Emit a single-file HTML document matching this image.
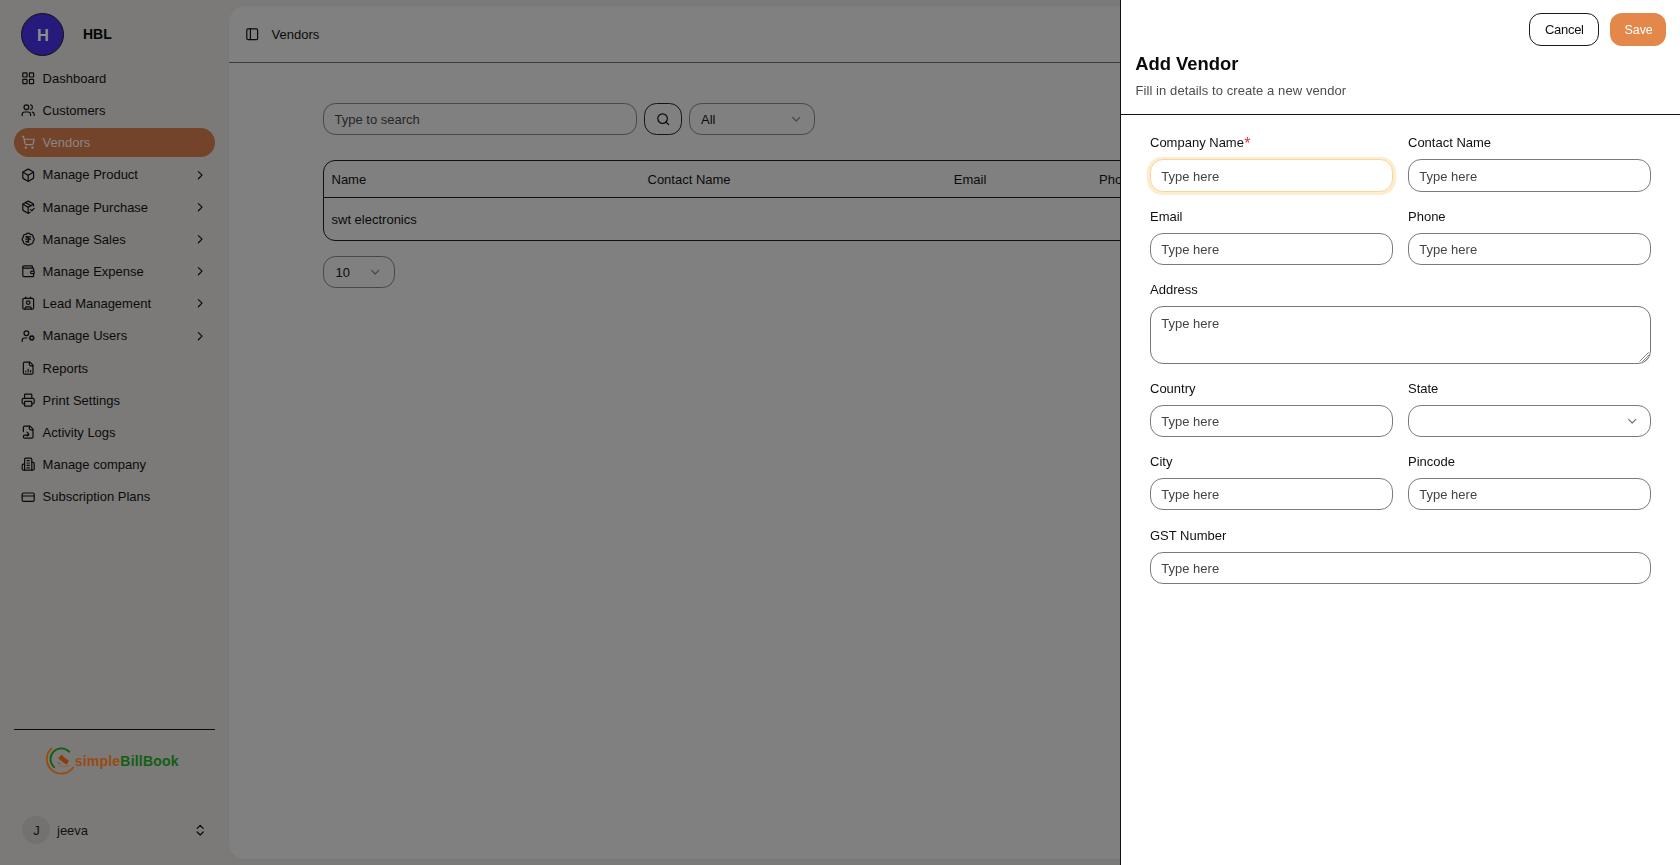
<!DOCTYPE html>
<html><head><meta charset="utf-8"><title>Add Vendor</title>
<style>
*{box-sizing:border-box;margin:0;padding:0}
html,body{width:1680px;height:865px;overflow:hidden}
body{position:relative;background:#7b7a78;font-family:"Liberation Sans",sans-serif;color:#0a0a0a}
.a{position:absolute}
.t{position:absolute;white-space:nowrap}
svg.i{position:absolute;fill:none;stroke:currentColor;stroke-linecap:round;stroke-linejoin:round;overflow:visible}
.inp{position:absolute;border:1px solid #7b7b7b;border-radius:13px;background:#fff}
.req{color:#f2303e;font-size:16px;line-height:10px;position:relative;top:2px;left:0.3px}
textarea{font-family:"Liberation Sans",sans-serif}
textarea::placeholder{color:#444;opacity:1}
</style></head><body>
<div class="a" style="left:21px;top:13px;width:43px;height:43px;border-radius:50%;background:#261b7c;border:1px solid #111"></div>
<div class="t" style="left:37.00px;top:24.78px;font-size:16.5px;line-height:21px;font-weight:700;color:#8d8d8d;">H</div>
<div class="t" style="left:83.00px;top:25.15px;font-size:14px;line-height:18px;font-weight:700;color:#050505;">HBL</div>
<div class="a" style="left:14px;top:128px;width:201px;height:29px;border-radius:14.5px;background:#73442a"></div>
<svg class="i" style="left:21.00px;top:71.00px;width:14.4px;height:14.4px;color:#0b0b0b;stroke-width:2;" viewBox="0 0 24 24"><rect width="7" height="7" x="3" y="3" rx="1"/><rect width="7" height="7" x="14" y="3" rx="1"/><rect width="7" height="7" x="14" y="14" rx="1"/><rect width="7" height="7" x="3" y="14" rx="1"/></svg>
<div class="t" style="left:42.60px;top:70.80px;font-size:13px;line-height:16px;font-weight:400;color:#0b0b0b;">Dashboard</div>
<svg class="i" style="left:21.00px;top:103.20px;width:14.4px;height:14.4px;color:#0b0b0b;stroke-width:2;" viewBox="0 0 24 24"><path d="M16 21v-2a4 4 0 0 0-4-4H6a4 4 0 0 0-4 4v2"/><circle cx="9" cy="7" r="4"/><path d="M22 21v-2a4 4 0 0 0-3-3.87"/><path d="M16 3.13a4 4 0 0 1 0 7.75"/></svg>
<div class="t" style="left:42.60px;top:103.00px;font-size:13px;line-height:16px;font-weight:400;color:#0b0b0b;">Customers</div>
<svg class="i" style="left:21.00px;top:135.40px;width:14.4px;height:14.4px;color:#8b8688;stroke-width:2;" viewBox="0 0 24 24"><circle cx="8" cy="21" r="1"/><circle cx="19" cy="21" r="1"/><path d="M2.05 2.05h2l2.66 12.42a2 2 0 0 0 2 1.58h9.78a2 2 0 0 0 1.95-1.57l1.65-7.43H5.12"/></svg>
<div class="t" style="left:42.60px;top:135.20px;font-size:13px;line-height:16px;font-weight:400;color:#8b8688;">Vendors</div>
<svg class="i" style="left:21.00px;top:167.60px;width:14.4px;height:14.4px;color:#0b0b0b;stroke-width:2;" viewBox="0 0 24 24"><path d="M21 8a2 2 0 0 0-1-1.73l-7-4a2 2 0 0 0-2 0l-7 4A2 2 0 0 0 3 8v8a2 2 0 0 0 1 1.73l7 4a2 2 0 0 0 2 0l7-4A2 2 0 0 0 21 16Z"/><path d="m3.3 7 8.7 5 8.7-5"/><path d="M12 22V12"/></svg>
<div class="t" style="left:42.60px;top:167.40px;font-size:13px;line-height:16px;font-weight:400;color:#0b0b0b;">Manage Product</div>
<svg class="i" style="left:192.80px;top:167.60px;width:14.4px;height:14.4px;color:#0b0b0b;stroke-width:2;" viewBox="0 0 24 24"><path d="m9 18 6-6-6-6"/></svg>
<svg class="i" style="left:21.00px;top:199.80px;width:14.4px;height:14.4px;color:#0b0b0b;stroke-width:2;" viewBox="0 0 24 24"><path d="m16 16 2 2 4-4"/><path d="M21 10V8a2 2 0 0 0-1-1.73l-7-4a2 2 0 0 0-2 0l-7 4A2 2 0 0 0 3 8v8a2 2 0 0 0 1 1.73l7 4a2 2 0 0 0 2 0l2-1.14"/><path d="m7.5 4.27 9 5.15"/><path d="M3.29 7 12 12l8.71-5"/><path d="M12 22V12"/></svg>
<div class="t" style="left:42.60px;top:199.60px;font-size:13px;line-height:16px;font-weight:400;color:#0b0b0b;">Manage Purchase</div>
<svg class="i" style="left:192.80px;top:199.80px;width:14.4px;height:14.4px;color:#0b0b0b;stroke-width:2;" viewBox="0 0 24 24"><path d="m9 18 6-6-6-6"/></svg>
<svg class="i" style="left:21.00px;top:232.00px;width:14.4px;height:14.4px;color:#0b0b0b;stroke-width:2;" viewBox="0 0 24 24"><path d="M3.85 8.62a4 4 0 0 1 4.78-4.77 4 4 0 0 1 6.74 0 4 4 0 0 1 4.78 4.78 4 4 0 0 1 0 6.74 4 4 0 0 1-4.77 4.78 4 4 0 0 1-6.75 0 4 4 0 0 1-4.78-4.77 4 4 0 0 1 0-6.76Z"/><path d="M8 8h8"/><path d="M8 12h8"/><path d="m13 17-5-1h1a4 4 0 0 0 0-8"/></svg>
<div class="t" style="left:42.60px;top:231.80px;font-size:13px;line-height:16px;font-weight:400;color:#0b0b0b;">Manage Sales</div>
<svg class="i" style="left:192.80px;top:232.00px;width:14.4px;height:14.4px;color:#0b0b0b;stroke-width:2;" viewBox="0 0 24 24"><path d="m9 18 6-6-6-6"/></svg>
<svg class="i" style="left:21.00px;top:264.20px;width:14.4px;height:14.4px;color:#0b0b0b;stroke-width:2;" viewBox="0 0 24 24"><path d="M19 7V4a1 1 0 0 0-1-1H5a2 2 0 0 0 0 4h15a1 1 0 0 1 1 1v4h-3a2 2 0 0 0 0 4h3a1 1 0 0 0 1-1v-2a1 1 0 0 0-1-1"/><path d="M3 5v14a2 2 0 0 0 2 2h15a1 1 0 0 0 1-1v-4"/></svg>
<div class="t" style="left:42.60px;top:264.00px;font-size:13px;line-height:16px;font-weight:400;color:#0b0b0b;">Manage Expense</div>
<svg class="i" style="left:192.80px;top:264.20px;width:14.4px;height:14.4px;color:#0b0b0b;stroke-width:2;" viewBox="0 0 24 24"><path d="m9 18 6-6-6-6"/></svg>
<svg class="i" style="left:21.00px;top:296.40px;width:14.4px;height:14.4px;color:#0b0b0b;stroke-width:2;" viewBox="0 0 24 24"><path d="M16 2v2"/><path d="M7 22v-2a2 2 0 0 1 2-2h6a2 2 0 0 1 2 2v2"/><path d="M8 2v2"/><circle cx="12" cy="11" r="3"/><rect x="3" y="4" width="18" height="18" rx="2"/></svg>
<div class="t" style="left:42.60px;top:296.20px;font-size:13px;line-height:16px;font-weight:400;color:#0b0b0b;">Lead Management</div>
<svg class="i" style="left:192.80px;top:296.40px;width:14.4px;height:14.4px;color:#0b0b0b;stroke-width:2;" viewBox="0 0 24 24"><path d="m9 18 6-6-6-6"/></svg>
<svg class="i" style="left:21.00px;top:328.60px;width:14.4px;height:14.4px;color:#0b0b0b;stroke-width:2;" viewBox="0 0 24 24"><path d="M10 15H6a4 4 0 0 0-4 4v2"/><path d="m14.305 16.53.923-.382"/><path d="m15.228 13.852-.923-.383"/><path d="m16.852 12.228-.383-.923"/><path d="m16.852 17.772-.383.924"/><path d="m19.148 12.228.383-.923"/><path d="m19.53 18.696-.382-.924"/><path d="m20.772 13.852.924-.383"/><path d="m20.772 16.148.924.383"/><circle cx="18" cy="15" r="3"/><circle cx="9" cy="7" r="4"/></svg>
<div class="t" style="left:42.60px;top:328.40px;font-size:13px;line-height:16px;font-weight:400;color:#0b0b0b;">Manage Users</div>
<svg class="i" style="left:192.80px;top:328.60px;width:14.4px;height:14.4px;color:#0b0b0b;stroke-width:2;" viewBox="0 0 24 24"><path d="m9 18 6-6-6-6"/></svg>
<svg class="i" style="left:21.00px;top:360.80px;width:14.4px;height:14.4px;color:#0b0b0b;stroke-width:2;" viewBox="0 0 24 24"><path d="M15 2H6a2 2 0 0 0-2 2v16a2 2 0 0 0 2 2h12a2 2 0 0 0 2-2V7Z"/><path d="M14 2v4a2 2 0 0 0 2 2h4"/><path d="M8 18v-1"/><path d="M12 18v-4"/><path d="M16 18v-2"/></svg>
<div class="t" style="left:42.60px;top:360.60px;font-size:13px;line-height:16px;font-weight:400;color:#0b0b0b;">Reports</div>
<svg class="i" style="left:21.00px;top:393.00px;width:14.4px;height:14.4px;color:#0b0b0b;stroke-width:2;" viewBox="0 0 24 24"><path d="M6 18H4a2 2 0 0 1-2-2v-5a2 2 0 0 1 2-2h16a2 2 0 0 1 2 2v5a2 2 0 0 1-2 2h-2"/><path d="M6 9V3a1 1 0 0 1 1-1h10a1 1 0 0 1 1 1v6"/><rect x="6" y="14" width="12" height="8" rx="1"/></svg>
<div class="t" style="left:42.60px;top:392.80px;font-size:13px;line-height:16px;font-weight:400;color:#0b0b0b;">Print Settings</div>
<svg class="i" style="left:21.00px;top:425.20px;width:14.4px;height:14.4px;color:#0b0b0b;stroke-width:2;" viewBox="0 0 24 24"><path d="m10 18 3-3-3-3"/><path d="M14 2v4a2 2 0 0 0 2 2h4"/><path d="M4 11V4a2 2 0 0 1 2-2h9l5 5v13a2 2 0 0 1-2 2H6a2 2 0 0 1-2-2v-1a2 2 0 0 1 2-2h7"/></svg>
<div class="t" style="left:42.60px;top:425.00px;font-size:13px;line-height:16px;font-weight:400;color:#0b0b0b;">Activity Logs</div>
<svg class="i" style="left:21.00px;top:457.40px;width:14.4px;height:14.4px;color:#0b0b0b;stroke-width:2;" viewBox="0 0 24 24"><path d="M6 22V4a2 2 0 0 1 2-2h8a2 2 0 0 1 2 2v18Z"/><path d="M6 12H4a2 2 0 0 0-2 2v6a2 2 0 0 0 2 2h2"/><path d="M18 9h2a2 2 0 0 1 2 2v9a2 2 0 0 1-2 2h-2"/><path d="M10 6h4"/><path d="M10 10h4"/><path d="M10 14h4"/><path d="M10 18h4"/></svg>
<div class="t" style="left:42.60px;top:457.20px;font-size:13px;line-height:16px;font-weight:400;color:#0b0b0b;">Manage company</div>
<svg class="i" style="left:21.00px;top:489.60px;width:14.4px;height:14.4px;color:#0b0b0b;stroke-width:2;" viewBox="0 0 24 24"><rect width="20" height="14" x="2" y="5" rx="2"/><line x1="2" x2="22" y1="10" y2="10"/></svg>
<div class="t" style="left:42.60px;top:489.40px;font-size:13px;line-height:16px;font-weight:400;color:#0b0b0b;">Subscription Plans</div>
<div class="a" style="left:14px;top:729px;width:201px;height:1px;background:#0a0a0a"></div>
<svg class="a" style="left:40px;top:740px" width="40" height="40" viewBox="40 740 40 40">
<path d="M51.30 748.60 A14.5 14.5 0 1 0 73.09 767.54" fill="none" stroke="#9a4d10" stroke-width="1.9" stroke-linecap="round"/>
<path d="M54.11 767.09 A10.75 10.75 0 1 1 69.11 751.71" fill="none" stroke="#12600f" stroke-width="1.9" stroke-linecap="round"/>
<path d="M58.3 758.3 L61.5 754.8 Q65.5 759 68.9 760.8 L66.8 764.5 Q62.5 762.5 58.3 758.3 Z" fill="#8c3c0a"/>
<path d="M57.8 762.2 Q58.6 763.8 60.2 763.6" fill="none" stroke="#9a4a1c" stroke-width="1.1"/>
<path d="M58.5 765.8 Q63.5 767.2 69 765.6" fill="none" stroke="#94603e" stroke-width="1"/>
</svg>
<div class="t" style="left:74.80px;top:751.55px;font-size:14px;line-height:18px;font-weight:700;color:#0b0b0b;letter-spacing:0.2px"><span style="color:#984a12">simple</span><span style="color:#125f12">BillBook</span></div>
<div class="a" style="left:21.5px;top:816.3px;width:28px;height:28px;border-radius:50%;background:#737270"></div>
<div class="t" style="left:33.20px;top:823.10px;font-size:13px;line-height:16px;font-weight:400;color:#111;">J</div>
<div class="t" style="left:57.00px;top:822.80px;font-size:13px;line-height:16px;font-weight:400;color:#111;">jeeva</div>
<svg class="i" style="left:192.80px;top:822.80px;width:14.4px;height:14.4px;color:#0b0b0b;stroke-width:2;" viewBox="0 0 24 24"><path d="m7 15 5 5 5-5"/><path d="m7 9 5-5 5 5"/></svg>
<div class="a" style="left:229px;top:6px;width:1445px;height:853px;background:#808080;border-radius:15px;box-shadow:0 0 1px rgba(0,0,0,0.12)"></div>
<div class="a" style="left:229px;top:62px;width:900px;height:1px;background:#3d3d3d"></div>
<svg class="i" style="left:245.10px;top:26.60px;width:14.4px;height:14.4px;color:#0b0b0b;stroke-width:2;" viewBox="0 0 24 24"><rect width="18" height="18" x="3" y="3" rx="2"/><path d="M9 3v18"/></svg>
<div class="t" style="left:271.60px;top:26.50px;font-size:13px;line-height:16px;font-weight:400;color:#0b0b0b;">Vendors</div>
<div class="a" style="left:323px;top:103px;width:314px;height:32px;border:1px solid #484848;border-radius:12.5px"></div>
<div class="t" style="left:334.50px;top:112.10px;font-size:13px;line-height:16px;font-weight:400;color:#262626;">Type to search</div>
<div class="a" style="left:644px;top:103px;width:38px;height:32px;border:1px solid #141414;border-radius:12.5px"></div>
<svg class="i" style="left:655.80px;top:111.70px;width:14.4px;height:14.4px;color:#0b0b0b;stroke-width:2;" viewBox="0 0 24 24"><circle cx="11" cy="11" r="8"/><path d="m21 21-4.3-4.3"/></svg>
<div class="a" style="left:689px;top:103px;width:126px;height:32px;border:1px solid #484848;border-radius:12.5px"></div>
<div class="t" style="left:701.00px;top:112.10px;font-size:13px;line-height:16px;font-weight:400;color:#0b0b0b;">All</div>
<svg class="i" style="left:789.00px;top:112.20px;width:14.4px;height:14.4px;color:#474747;stroke-width:2;" viewBox="0 0 24 24"><path d="m6 9 6 6 6-6"/></svg>
<div class="a" style="left:323px;top:160px;width:900px;height:81px;border:1px solid #111;border-radius:12px"></div>
<div class="a" style="left:323px;top:197px;width:900px;height:1px;background:#111"></div>
<div class="t" style="left:331.50px;top:171.60px;font-size:13px;line-height:16px;font-weight:400;color:#0b0b0b;">Name</div>
<div class="t" style="left:647.50px;top:171.60px;font-size:13px;line-height:16px;font-weight:400;color:#0b0b0b;">Contact Name</div>
<div class="t" style="left:953.80px;top:171.60px;font-size:13px;line-height:16px;font-weight:400;color:#0b0b0b;">Email</div>
<div class="t" style="left:1099.00px;top:171.60px;font-size:13px;line-height:16px;font-weight:400;color:#0b0b0b;">Phone</div>
<div class="t" style="left:331.50px;top:212.10px;font-size:13px;line-height:16px;font-weight:400;color:#0b0b0b;">swt electronics</div>
<div class="a" style="left:323px;top:256px;width:72px;height:32px;border:1px solid #484848;border-radius:12.5px"></div>
<div class="t" style="left:335.50px;top:265.30px;font-size:13px;line-height:16px;font-weight:400;color:#0b0b0b;">10</div>
<svg class="i" style="left:368.00px;top:265.00px;width:14.4px;height:14.4px;color:#474747;stroke-width:2;" viewBox="0 0 24 24"><path d="m6 9 6 6 6-6"/></svg>
<div class="a" style="left:0;top:0;width:1680px;height:865px;will-change:transform">
<div class="a" style="left:1120px;top:0;width:560px;height:865px;background:#fff;border-left:1px solid #111"></div>
<div class="a" style="left:1529px;top:13px;width:70px;height:33px;border:1.3px solid #1a1a1a;border-radius:12px"></div>
<div class="t" style="left:1545.00px;top:21.60px;font-size:13px;line-height:16px;font-weight:400;color:#111;letter-spacing:-0.3px">Cancel</div>
<div class="a" style="left:1610px;top:13px;width:56px;height:33px;background:#e3874a;border-radius:12px"></div>
<div class="t" style="left:1624.50px;top:21.80px;font-size:12.4px;line-height:16px;font-weight:400;color:#fff;">Save</div>
<div class="t" style="left:1135.20px;top:52.12px;font-size:18.4px;line-height:23px;font-weight:700;color:#0a0a0a;">Add Vendor</div>
<div class="t" style="left:1135.40px;top:82.50px;font-size:13px;line-height:16px;font-weight:400;color:#4d4d4d;letter-spacing:0.09px">Fill in details to create a new vendor</div>
<div class="a" style="left:1121px;top:114px;width:559px;height:1px;background:#111"></div>
<div class="t" style="left:1150.00px;top:135.40px;font-size:13px;line-height:16px;font-weight:400;color:#111;">Company Name<span class="req">*</span></div>
<div class="a" style="left:1147px;top:156.5px;width:248.5px;height:38px;border-radius:15px;background:#fdedd0"></div>
<div class="inp" style="left:1150px;top:159px;width:242.5px;height:32.5px;border-color:#f9d59e"></div>
<div class="t" style="left:1161.30px;top:169.30px;font-size:13px;line-height:16px;font-weight:400;color:#444;">Type here</div>
<div class="t" style="left:1408.00px;top:135.40px;font-size:13px;line-height:16px;font-weight:400;color:#111;">Contact Name</div>
<div class="inp" style="left:1408px;top:159px;width:242.5px;height:32.5px"></div>
<div class="t" style="left:1419.30px;top:169.30px;font-size:13px;line-height:16px;font-weight:400;color:#444;">Type here</div>
<div class="t" style="left:1150.00px;top:209.30px;font-size:13px;line-height:16px;font-weight:400;color:#111;">Email</div>
<div class="inp" style="left:1150px;top:233px;width:242.5px;height:32px"></div>
<div class="t" style="left:1161.30px;top:242.10px;font-size:13px;line-height:16px;font-weight:400;color:#444;">Type here</div>
<div class="t" style="left:1408.00px;top:209.30px;font-size:13px;line-height:16px;font-weight:400;color:#111;">Phone</div>
<div class="inp" style="left:1408px;top:233px;width:242.5px;height:32px"></div>
<div class="t" style="left:1419.30px;top:242.10px;font-size:13px;line-height:16px;font-weight:400;color:#444;">Type here</div>
<div class="t" style="left:1150.00px;top:281.70px;font-size:13px;line-height:16px;font-weight:400;color:#111;">Address</div>
<textarea class="a" placeholder="Type here" style="left:1150px;top:306px;width:501px;height:57.5px;border:1px solid #767676;border-radius:13px;padding:8.8px 10.3px;font-size:13px;line-height:16px;resize:none;outline:none;color:#555"></textarea>
<svg class="a" style="left:1636px;top:349px" width="14" height="14" viewBox="0 0 14 14"><path d="M3.5 12.5 L12.8 3.2 M6.2 12.8 L13 6 M8.5 12.6 L12.8 8.3 M12.3 12.5 L12.6 12.2" stroke="#6f6f6f" stroke-width="0.8" fill="none"/></svg>
<div class="t" style="left:1150.00px;top:381.20px;font-size:13px;line-height:16px;font-weight:400;color:#111;">Country</div>
<div class="inp" style="left:1150px;top:405px;width:242.5px;height:32px"></div>
<div class="t" style="left:1161.30px;top:413.90px;font-size:13px;line-height:16px;font-weight:400;color:#444;">Type here</div>
<div class="t" style="left:1408.00px;top:381.20px;font-size:13px;line-height:16px;font-weight:400;color:#111;">State</div>
<div class="inp" style="left:1408px;top:405px;width:242.5px;height:32px"></div>
<svg class="i" style="left:1625.00px;top:414.20px;width:14.4px;height:14.4px;color:#767676;stroke-width:2;" viewBox="0 0 24 24"><path d="m6 9 6 6 6-6"/></svg>
<div class="t" style="left:1150.00px;top:454.40px;font-size:13px;line-height:16px;font-weight:400;color:#111;">City</div>
<div class="inp" style="left:1150px;top:478px;width:242.5px;height:32px"></div>
<div class="t" style="left:1161.30px;top:487.10px;font-size:13px;line-height:16px;font-weight:400;color:#444;">Type here</div>
<div class="t" style="left:1408.00px;top:454.40px;font-size:13px;line-height:16px;font-weight:400;color:#111;">Pincode</div>
<div class="inp" style="left:1408px;top:478px;width:242.5px;height:32px"></div>
<div class="t" style="left:1419.30px;top:487.10px;font-size:13px;line-height:16px;font-weight:400;color:#444;">Type here</div>
<div class="t" style="left:1150.00px;top:528.00px;font-size:13px;line-height:16px;font-weight:400;color:#111;">GST Number</div>
<div class="inp" style="left:1150px;top:552px;width:501px;height:32px"></div>
<div class="t" style="left:1161.30px;top:560.90px;font-size:13px;line-height:16px;font-weight:400;color:#444;">Type here</div>
</div>
</body></html>
